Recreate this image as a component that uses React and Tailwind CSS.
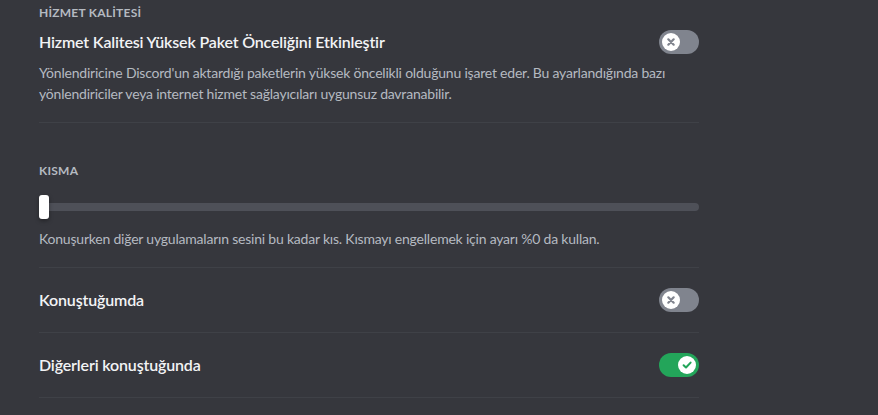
import React from 'react';

const font = { fontFamily: 'Lato, "Noto Sans", sans-serif' };

const Toggle = ({ on }) => (
  <div
    className={`relative h-6 w-10 shrink-0 rounded-full ${on ? 'bg-[#23a55a]' : 'bg-[#80848e]'}`}
  >
    <div
      className={`absolute top-[3px] flex h-[18px] w-[18px] items-center justify-center rounded-full bg-white ${
        on ? 'left-[19px]' : 'left-[3px]'
      }`}
    >
      {on ? (
        <svg width="12" height="12" viewBox="0 0 12 12" fill="none">
          <path d="M2.6 6.2 L5 8.5 L9.6 3.6" stroke="#23a55a" strokeWidth="2" strokeLinecap="round" strokeLinejoin="round" />
        </svg>
      ) : (
        <svg width="12" height="12" viewBox="0 0 12 12" fill="none">
          <path d="M3.3 3.3 L8.7 8.7 M8.7 3.3 L3.3 8.7" stroke="#80848e" strokeWidth="2.2" strokeLinecap="round" />
        </svg>
      )}
    </div>
  </div>
);

const ToggleRow = ({ label, on }) => (
  <div className="flex h-[65px] items-center justify-between border-b border-[#3f4147]">
    <div className="text-base font-semibold leading-6 tracking-[-0.01em] text-[#f2f3f5]">{label}</div>
    <Toggle on={on} />
  </div>
);

export default function App() {
  return (
    <div className="min-h-screen w-full bg-[#36373d]" style={font}>
      <div className="ml-[39px] w-[660px] pt-[5px]">
        <h2 className="h-4 text-xs font-bold uppercase leading-4 tracking-[0.02em] text-[#b5bac1]">
          HİZMET KALİTESİ
        </h2>
        <div className="mt-[9px] flex items-center justify-between">
          <div className="text-base font-semibold leading-6 tracking-[-0.01em] text-[#f2f3f5]">
            Hizmet Kalitesi Yüksek Paket Önceliğini Etkinleştir
          </div>
          <Toggle on={false} />
        </div>
        <p className="mt-2 w-[800px] text-sm leading-[21px] tracking-[-0.015em] text-[#b5bac1]">
          Yönlendiricine Discord'un aktardığı paketlerin yüksek öncelikli olduğunu işaret eder. Bu ayarlandığında bazı
          <br />
          yönlendiriciler veya internet hizmet sağlayıcıları uygunsuz davranabilir.
        </p>
        <div className="mt-[18px] border-b border-[#3f4147]" />

        <h2 className="mt-10 h-4 text-xs font-bold uppercase leading-4 tracking-[0.02em] text-[#b5bac1]">
          KISMA
        </h2>
        <div className="relative mt-4 flex h-6 items-center">
          <div className="h-2 w-full rounded-full bg-[#4e5058]" />
          <div className="absolute left-0 top-0 h-6 w-[10px] rounded-[3px] bg-white shadow-[0_2px_4px_rgba(0,0,0,0.35)]" />
        </div>
        <p className="mt-[10px] text-sm leading-5 tracking-[-0.015em] text-[#b5bac1]">
          Konuşurken diğer uygulamaların sesini bu kadar kıs. Kısmayı engellemek için ayarı %0 da kullan.
        </p>
        <div className="mt-[18px] border-b border-[#3f4147]" />

        <ToggleRow label="Konuştuğumda" on={false} />
        <ToggleRow label="Diğerleri konuştuğunda" on={true} />
      </div>
    </div>
  );
}
